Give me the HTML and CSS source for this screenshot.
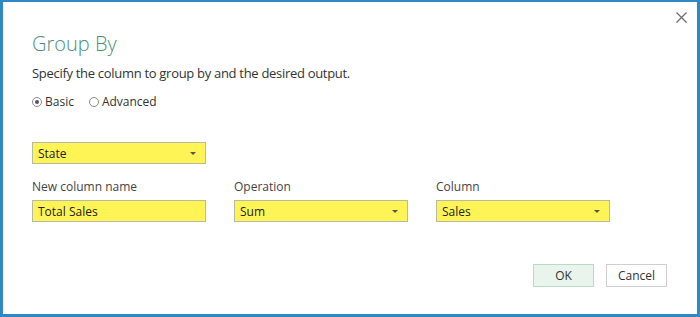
FILE: index.html
```html
<!DOCTYPE html>
<html lang="en">
<head>
    <meta charset="UTF-8">
    <title>Group By</title>
    <link rel="stylesheet" href="styles.css">
</head>
<body>
    <div class="dialog">
        <button class="close" aria-label="Close">
            <svg width="11" height="11" viewBox="0 0 11 11"><path d="M0.5 0.5 L10.5 10.5 M10.5 0.5 L0.5 10.5" stroke="#6b6b6b" stroke-width="1.2" fill="none"/></svg>
        </button>
        <h1 class="title">Group By</h1>
        <p class="subtitle">Specify the column to group by and the desired output.</p>
        <div class="radios">
            <label class="radio"><span class="dot checked"></span>Basic</label>
            <label class="radio"><span class="dot"></span>Advanced</label>
        </div>
        <div class="select group-select">
            <span>State</span><span class="caret"></span>
        </div>
        <div class="fields">
            <div class="field">
                <div class="label">New column name</div>
                <div class="select"><span>Total Sales</span></div>
            </div>
            <div class="field">
                <div class="label">Operation</div>
                <div class="select"><span>Sum</span><span class="caret"></span></div>
            </div>
            <div class="field">
                <div class="label">Column</div>
                <div class="select"><span>Sales</span><span class="caret"></span></div>
            </div>
        </div>
        <div class="actions">
            <button class="btn ok">OK</button>
            <button class="btn">Cancel</button>
        </div>
    </div>
</body>
</html>
```
FILE: styles.css
```css
html, body {
    margin: 0;
    height: 100%;
}
body {
    font-family: "Open Sans", "Noto Sans", sans-serif;
    color: #333333;
    background: #ffffff;
}
.dialog {
    box-sizing: border-box;
    height: 317px;
    width: 700px;
    border: 3px solid #2f87c4;
    border-top-width: 2px;
    padding: 0 0 0 29px;
    position: relative;
}
.close {
    position: absolute;
    top: 9px;
    right: 9px;
    width: 13px;
    height: 13px;
    padding: 0;
    border: none;
    background: transparent;
    display: flex;
    align-items: center;
    justify-content: center;
}
.title {
    margin: 28px 0 0;
    font-size: 20px;
    font-weight: 300;
    line-height: 28px;
    color: #4d8f7d;
}
.subtitle {
    margin: 6px 0 0;
    font-size: 13px;
    letter-spacing: -0.3px;
    line-height: 18px;
    color: #333333;
}
.radios {
    display: flex;
    gap: 15px;
    margin-top: 12px;
    font-size: 12px;
    line-height: 16px;
}
.radio {
    display: flex;
    align-items: center;
    gap: 3px;
}
.dot {
    box-sizing: border-box;
    width: 10px;
    height: 10px;
    border: 1px solid #8a8a8a;
    border-radius: 50%;
    display: inline-flex;
    align-items: center;
    justify-content: center;
}
.dot.checked::after {
    content: "";
    width: 4px;
    height: 4px;
    border-radius: 50%;
    background: #555555;
}
.select {
    box-sizing: border-box;
    width: 174px;
    height: 22px;
    background: #fff455;
    border: 1px solid #b9b9a8;
    display: flex;
    align-items: center;
    justify-content: space-between;
    padding: 0 9px 0 5px;
    font-size: 12px;
    color: #222222;
}
.group-select {
    margin-top: 32px;
}
.caret {
    width: 0;
    height: 0;
    border-left: 3px solid transparent;
    border-right: 3px solid transparent;
    border-top: 3px solid #555555;
}
.fields {
    display: flex;
    gap: 28px;
    margin-top: 15px;
}
.label {
    font-size: 12px;
    line-height: 16px;
    color: #444444;
    margin-bottom: 5px;
}
.actions {
    display: flex;
    justify-content: flex-end;
    gap: 12px;
    margin-top: 42px;
    padding-right: 30px;
}
.btn {
    box-sizing: border-box;
    width: 61px;
    height: 23px;
    font-family: inherit;
    font-size: 12px;
    color: #333333;
    background: #ffffff;
    border: 1px solid #cfcfcf;
    padding: 0;
}
.btn.ok {
    background: #e8f4ec;
    border-color: #b6ddc3;
}
```
